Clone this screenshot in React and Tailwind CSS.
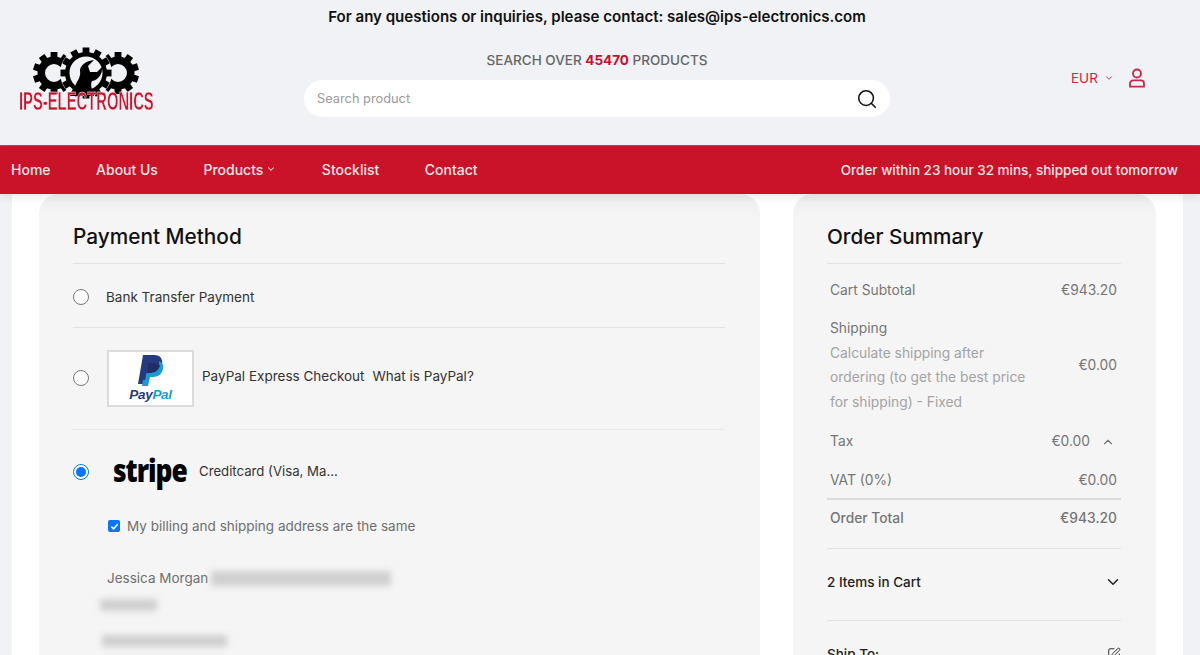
import React from 'react';
import { ChevronDown, ChevronUp, Search, SquarePen } from 'lucide-react';

const Gear = ({ cx, cy, r, ring = 7.5, teeth = 10 }) => (
    <g>
        {Array.from({ length: teeth }).map((_, i) => (
            <rect
                key={i}
                x={cx - 3.4}
                y={cy - r - 4.5}
                width={6.8}
                height={8}
                fill="#000"
                transform={`rotate(${(i * 360) / teeth} ${cx} ${cy})`}
            />
        ))}
        <circle cx={cx} cy={cy} r={r - ring / 2} fill="none" stroke="#000" strokeWidth={ring} />
    </g>
);

const Logo = () => (
    <div className="relative h-[70px] w-[136px]">
        <svg width="136" height="70" viewBox="0 0 136 70" className="absolute left-0 top-0">
            <Gear cx={35} cy={29} r={16.5} />
            <Gear cx={99} cy={29} r={16.5} />
            <circle cx={67} cy={29} r={26} fill="#f0f2f5" />
            <Gear cx={67} cy={29} r={21} ring={4.5} teeth={12} />
            <path d="M51 52 L57 40 C59 36 62 32 61 27 C61 21 67 17 75 16 L69 22 L71 28 L78 28 L83 23 C84 30 79 36 73 37 C71 40 73 46 75 52 Z" fill="#000" />
        </svg>
        <span className="absolute left-0 top-[44px] origin-top-left scale-x-[0.558] whitespace-nowrap font-['Liberation_Sans',sans-serif] text-[26.5px] leading-[27px] font-bold text-[#c8152e] [-webkit-text-stroke:0.4px_#fff]">
            IPS-ELECTRONICS
        </span>
    </div>
);

const PayPalLogo = () => (
    <div className="flex h-[57px] w-[87px] shrink-0 flex-col items-center border-2 border-[#dcdcdc] bg-white pt-[3px]">
        <svg width="26" height="31" viewBox="0 0 26 31">
            <path d="M5 0 H16 C23 0 25 5 24 9 C23 15 18 18 12 18 H9 L7 29 H0 Z" fill="#253b80" />
            <path d="M21 6 C25 8 26 11 25 14 C24 19 20 22 15 22 H12 L10 31 H4 L5 25 H7 L9 18 H12 C18 18 22 13 21 6 Z" fill="#179bd7" />
            <path d="M9 18 H12 C16 18 20 16 22 11 C21 9 19 8 15 8 H10.5 Z" fill="#222d65" />
        </svg>
        <span className="mt-[2px] font-['Liberation_Sans',sans-serif] text-[13.5px] leading-[14px] font-bold italic tracking-[-0.3px] text-[#253b80]">
            Pay<span className="text-[#179bd7]">Pal</span>
        </span>
    </div>
);

const Radio = ({ checked, className = '' }) =>
    checked ? (
        <div className={`flex h-4 w-4 shrink-0 items-center justify-center rounded-full border border-[#0075ff] bg-white ${className}`}>
            <div className="h-[10px] w-[10px] rounded-full bg-[#0075ff]" />
        </div>
    ) : (
        <div className={`h-4 w-4 shrink-0 rounded-full border border-[#767676] bg-white ${className}`} />
    );

const Blur = ({ className }) => <div className={`bg-[#cfcfcf] blur-[3px] ${className}`} />;

const SummaryRow = ({ label, value, bold, className = '' }) => (
    <div className={`flex items-center justify-between pl-[3px] pr-[4px] text-[13.8px] ${bold ? 'font-medium' : ''} text-[#757575] ${className}`}>
        <span>{label}</span>
        <span>{value}</span>
    </div>
);

const PaymentMethod = () => (
    <div className="h-[500px] w-[721px] rounded-t-[20px] bg-[#f5f5f5] bg-gradient-to-b from-[#eeeeee] to-[#f5f5f5] to-[24px] pl-[34px] pr-[35px] pt-[28px]">
        <h2 className="text-[20.8px] leading-[30px] font-medium text-[#111]">Payment Method</h2>
        <div className="mt-[11px] flex h-[65px] items-center border-y border-[#e2e2e2] pt-[3px] text-[13.5px] text-[#333]">
            <Radio />
            <span className="ml-[17px]">Bank Transfer Payment</span>
        </div>
        <div className="flex h-[102px] items-center border-b border-[#e8e8e8] text-[13.5px] text-[#333]">
            <Radio className="-translate-y-[1px]" />
            <div className="ml-[18px]">
                <PayPalLogo />
            </div>
            <span className="ml-2 -translate-y-[2px]">PayPal Express Checkout</span>
            <span className="ml-2 -translate-y-[2px]">What is PayPal?</span>
        </div>
        <div className="flex h-[84px] items-center text-[13.5px] text-[#333]">
            <Radio checked />
            <span className="ml-6 inline-block w-[74px] origin-left -translate-y-[2px] scale-x-[0.85] font-['Open_Sans',sans-serif] text-[31px] leading-[36px] font-extrabold tracking-[-1.2px] text-black">stripe</span>
            <span className="ml-3 text-[13.2px]">Creditcard (Visa, Ma...</span>
        </div>
        <label className="ml-[35px] mt-[2px] flex items-center text-[13.5px] text-[#6f6f6f]">
            <span className="flex h-[12px] w-[12px] items-center justify-center rounded-[2px] bg-[#0075ff]">
                <svg width="9" height="9" viewBox="0 0 10 10">
                    <path d="M1.5 5.2 L4 7.6 L8.5 2.4" fill="none" stroke="#fff" strokeWidth="1.8" />
                </svg>
            </span>
            <span className="ml-[7px]">My billing and shipping address are the same</span>
        </label>
        <div className="mt-[34px] ml-[34px] flex h-[16px] items-center text-[13.5px] text-[#6f6f6f]">
            <span>Jessica Morgan</span>
            <Blur className="ml-[3px] h-[15px] w-[180px]" />
        </div>
        <Blur className="ml-[27px] mt-[13px] h-[12px] w-[57px]" />
        <Blur className="ml-[29px] mt-[24px] h-[12px] w-[125px]" />
    </div>
);

const OrderSummary = () => (
    <div className="h-[500px] w-[363px] rounded-t-[20px] bg-[#f5f5f5] bg-gradient-to-b from-[#eeeeee] to-[#f5f5f5] to-[24px] pl-[34px] pr-[35px] pt-[28px]">
        <h2 className="text-[20.7px] leading-[30px] font-medium text-[#111]">Order Summary</h2>
        <div className="mt-[11px] border-t border-[#e2e2e2] pt-[16px]">
            <SummaryRow label="Cart Subtotal" value="€943.20" />
            <div className="mt-[15px] flex items-center justify-between pl-[3px] pr-[4px] text-[13.8px] text-[#757575]">
                <div>
                    <div className="leading-[25px]">Shipping</div>
                    <div className="w-[200px] leading-[24.5px] text-[#a3a3a3]">Calculate shipping after ordering (to get the best price for shipping) - Fixed</div>
                </div>
                <span>€0.00</span>
            </div>
            <div className="mt-[17px] flex items-center justify-end pl-[3px] pr-[6px] text-[13.8px] text-[#757575]">
                <span className="mr-auto">Tax</span>
                <span>€0.00</span>
                <ChevronUp size={14} strokeWidth={2} className="ml-[11px]" />
            </div>
            <SummaryRow label="VAT (0%)" value="€0.00" className="mt-[18px]" />
            <div className="mt-[7px] border-t-2 border-[#dcdcdc] pt-[8px]">
                <SummaryRow label="Order Total" value="€943.20" bold />
            </div>
        </div>
        <div className="mt-[20px] flex h-[73px] items-center justify-between border-y border-[#e2e2e2] pb-[5px] text-[13.5px] font-medium text-[#222]">
            <span>2 Items in Cart</span>
            <ChevronDown size={18} strokeWidth={2} className="-mr-[1px]" />
        </div>
        <div className="mt-[23px] flex items-center justify-between text-[13.5px] font-medium text-[#222]">
            <span>Ship To:</span>
            <SquarePen size={14} strokeWidth={1.6} />
        </div>
    </div>
);

export default function App() {
    return (
        <div className="h-[655px] w-[1200px] overflow-hidden bg-[#f0f2f5] font-['Inter',sans-serif]">
            <header className="h-[145px] bg-[#f0f2f5]">
                <div className="pr-[6px] pt-[7px] text-center text-[15.05px] leading-[20px] font-semibold text-[#111]">
                    For any questions or inquiries, please contact: sales@ips-electronics.com
                </div>
                <div className="flex">
                    <div className="mt-[17px] ml-[19px] w-[285px]">
                        <Logo />
                    </div>
                    <div className="w-[586px] pt-[23px]">
                        <div className="text-center text-[13.5px] leading-[20px] font-medium text-[#666]">
                            SEARCH OVER <span className="font-bold text-[#c8102e]">45470</span> PRODUCTS
                        </div>
                        <div className="mt-[10px] flex h-[37px] items-center justify-between rounded-[19px] bg-white pl-[13px] pr-[12px] text-[12.8px] text-[#9a9a9a]">
                            <span>Search product</span>
                            <Search size={22} strokeWidth={1.7} className="text-[#111]" />
                        </div>
                    </div>
                    <div className="ml-[181px] flex items-center self-start pt-[41px] text-[#c8264a]">
                        <span className="text-[13.5px] leading-[20px]">EUR</span>
                        <ChevronDown size={10} strokeWidth={2.2} className="ml-[6px]" />
                        <svg width="18" height="20" viewBox="0 0 18 20" fill="none" stroke="currentColor" strokeWidth="1.8" className="ml-[14px]">
                            <circle cx="9" cy="5.5" r="4" />
                            <path d="M2 18.6 V15.6 C2 13.8 3.4 12.4 5.2 12.4 H12.8 C14.6 12.4 16 13.8 16 15.6 V18.6 Z" />
                        </svg>
                    </div>
                </div>
            </header>
            <nav className="relative z-10 flex h-[49px] items-center justify-between border-t border-[#b8406a] bg-[#ca1229] pl-[11px] pr-[22px] text-[#fbe4e7] shadow-[0_4px_8px_rgba(0,0,0,0.07)]">
                <div className="flex -translate-y-[1px] items-center gap-[45.5px] text-[14px] font-medium">
                    <span>Home</span>
                    <span>About Us</span>
                    <span className="flex items-center">
                        Products
                        <ChevronDown size={10} strokeWidth={2.5} className="ml-[3px]" />
                    </span>
                    <span>Stocklist</span>
                    <span>Contact</span>
                </div>
                <span className="text-[13.5px] font-medium">Order within 23 hour 32 mins, shipped out tomorrow</span>
            </nav>
            <main className="ml-[12px] flex w-[1171px] gap-[33px] bg-white pl-[27px]">
                <PaymentMethod />
                <OrderSummary />
            </main>
        </div>
    );
}
